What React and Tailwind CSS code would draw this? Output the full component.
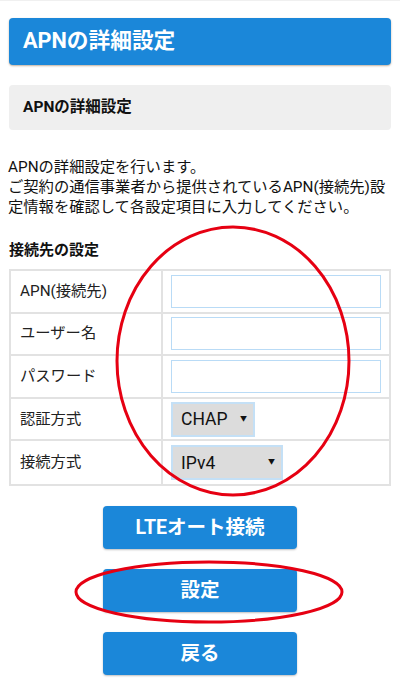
import React from "react";

const font = { fontFamily: '"Roboto","Noto Sans CJK JP",sans-serif' };

function Row({ label, children }) {
  return (
    <div className="flex h-[42.6px] border-b-2 border-[#e2e2e2] last:border-b-0">
      <div className="w-[152px] shrink-0 border-r-2 border-[#e2e2e2] flex items-center pl-[9px] text-[15.3px] text-[#222]">
        {label}
      </div>
      <div className="flex-1 flex items-center pl-[8px] pr-[8px]">{children}</div>
    </div>
  );
}

function Input() {
  return <div className="w-full h-[33px] border border-[#b9dbf6] bg-white" />;
}

function Select({ value, w }) {
  return (
    <div className={`${w} h-[35px] border-2 border-[#c4e0f6] bg-[#dcdcdc] flex items-center justify-between pl-[8px] pr-[6px]`}>
      <span className="text-[17.5px] text-[#111]">{value}</span>
      <span className="text-[7px] text-[#111]">▼</span>
    </div>
  );
}

function Btn({ children }) {
  return (
    <div className="w-[194px] h-[43px] rounded-[4px] bg-[#1b87d9] text-white font-bold text-[19.5px] flex items-center justify-center shadow-[0_1px_2px_rgba(0,0,0,0.25)]">
      {children}
    </div>
  );
}

export default function App() {
  return (
    <div className="relative w-[400px] h-[688px] bg-white overflow-hidden border-t border-[#f0f0f0]" style={font}>
      <div className="px-[9px] pt-[17px]">
        <div className="h-[47px] rounded-[4px] bg-[#1b87d9] shadow-[0_1px_2px_rgba(120,80,40,0.45)] flex items-center pl-[14px] text-white font-bold text-[21.7px]">
          APNの詳細設定
        </div>
        <div className="mt-[20px] h-[45px] rounded-[4px] bg-[#efefef] flex items-center pl-[14px] text-[#111] font-bold text-[15.5px]">
          APNの詳細設定
        </div>
      </div>
      <div className="px-[8px] mt-[27px] text-[15.3px] leading-[20px] text-[#111] whitespace-nowrap">
        APNの詳細設定を行います。<br />
        ご契約の通信事業者から提供されているAPN(接続先)設<br />
        定情報を確認して各設定項目に入力してください。
      </div>
      <div className="px-[9px] mt-[23px] text-[15px] font-bold text-[#111] leading-[20px]">接続先の設定</div>
      <div className="mx-[9px] mt-[9px] border-2 border-[#e2e2e2]">
        <Row label="APN(接続先)"><Input /></Row>
        <Row label="ユーザー名"><Input /></Row>
        <Row label="パスワード"><Input /></Row>
        <Row label="認証方式"><Select value="CHAP" w="w-[84px]" /></Row>
        <Row label="接続方式"><Select value="IPv4" w="w-[112px]" /></Row>
      </div>
      <div className="flex flex-col items-center gap-[20px] mt-[20px]">
        <Btn>LTEオート接続</Btn>
        <Btn>設定</Btn>
        <Btn>戻る</Btn>
      </div>
      <svg className="absolute inset-0 pointer-events-none" width="400" height="688">
        <ellipse cx="233" cy="360" rx="116" ry="134" fill="none" stroke="#e60012" strokeWidth="3" />
        <ellipse cx="209" cy="591" rx="133" ry="30" fill="none" stroke="#e60012" strokeWidth="3" />
      </svg>
    </div>
  );
}
